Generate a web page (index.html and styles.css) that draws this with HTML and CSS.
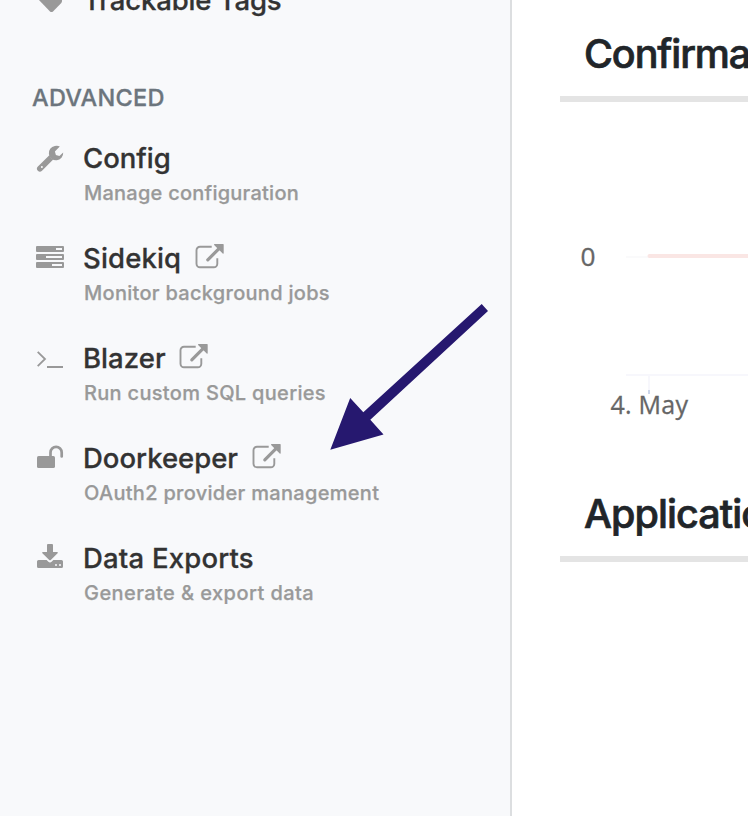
FILE: index.html
```html
<!DOCTYPE html>
<html lang="en">
<head>
<meta charset="utf-8">
<title>Admin</title>
<link rel="stylesheet" href="styles.css">
</head>
<body>
<svg class="symbols" aria-hidden="true">
  <symbol id="external" viewBox="0 0 30 30">
    <path d="M16.7 4.7H5A3.5 3.5 0 0 0 1.5 8.2V21.8A3.5 3.5 0 0 0 5 25.3H18.8A3.5 3.5 0 0 0 22.3 21.8V16.3" fill="none" stroke="currentColor" stroke-width="1.9"/>
    <path d="M12.8 17.8L25 5.7" stroke="currentColor" stroke-width="3.2" stroke-linecap="round"/>
    <path d="M19.5 2H28Q28.7 2 28.7 2.7V11.2Q28.5 12 27.7 11.5L19.1 3Q18.8 2.2 19.5 2Z" fill="currentColor"/>
  </symbol>
</svg>
<div class="app">
  <aside class="sidebar">
    <a class="item item-cut">
      <svg class="icon" viewBox="0 0 30 30"><path d="M2 2H14L25.5 15Q26.7 17 25.3 19L17 27.4Q15.5 28.4 14 27.4L2 15Z" fill="currentColor"/></svg>
      <span class="title t-tags">Trackable Tags</span>
    </a>
    <h2 class="section">ADVANCED</h2>
    <nav class="list">
      <a class="item">
        <svg class="icon" viewBox="0 0 30 30">
          <path d="M13.6 13L1.9 24.6A2.9 2.9 0 0 0 6 28.8L17.2 17.6Q14.5 16.2 13.6 13Z" fill="currentColor"/>
          <circle cx="5.9" cy="24.9" r="1" class="hole"/>
          <path d="M23.8 4.6Q21.7 3.3 18.8 4A7.2 7.2 0 1 0 27.2 10.6L23.4 14.1L19.9 13L18.9 9.5Z" fill="currentColor"/>
        </svg>
        <span class="body"><span class="head"><span class="title t-config">Config</span></span><span class="sub s-config">Manage configuration</span></span>
      </a>
      <a class="item">
        <svg class="icon" viewBox="0 0 30 30">
          <g fill="currentColor"><rect y="4" width="28" height="6" rx="1"/><rect y="12" width="28" height="6" rx="1"/><rect y="20" width="28" height="6" rx="1"/></g>
          <g class="hole"><rect x="20" y="6" width="6" height="2"/><rect x="10" y="14" width="16" height="2"/><rect x="16" y="22" width="10" height="2"/></g>
        </svg>
        <span class="body"><span class="head"><span class="title t-sidekiq">Sidekiq</span><svg class="ext"><use href="#external"/></svg></span><span class="sub s-sidekiq">Monitor background jobs</span></span>
      </a>
      <a class="item">
        <svg class="icon" viewBox="0 0 30 30"><path d="M1.7 9.8L9 17L1.7 24.2" fill="none" stroke="currentColor" stroke-width="1.8"/><rect x="11" y="24" width="16" height="2" fill="currentColor"/></svg>
        <span class="body"><span class="head"><span class="title t-blazer">Blazer</span><svg class="ext"><use href="#external"/></svg></span><span class="sub s-blazer">Run custom SQL queries</span></span>
      </a>
      <a class="item">
        <svg class="icon" viewBox="0 0 30 30"><rect x="1" y="14" width="18" height="12" rx="1.6" fill="currentColor"/><path d="M14.5 14.5V10.5A5.6 5.6 0 0 1 25.7 10.5V14.5" fill="none" stroke="currentColor" stroke-width="2.7" stroke-linecap="round"/></svg>
        <span class="body"><span class="head"><span class="title t-door">Doorkeeper</span><svg class="ext"><use href="#external"/></svg></span><span class="sub s-door">OAuth2 provider management</span></span>
      </a>
      <a class="item">
        <svg class="icon" viewBox="0 0 30 30">
          <path d="M11 3Q11 2 12 2H16Q17 2 17 3V10H21.3Q22.3 10.3 21.6 11.3L14.8 18Q14 18.6 13.2 18L6.4 11.3Q5.7 10.3 6.7 10H11Z" fill="currentColor"/>
          <path d="M2.5 18H10.6L12.4 19.8Q14 21.1 15.6 19.8L17.4 18H25.5Q27 18 27 19.5V24.5Q27 26 25.5 26H2.5Q1 26 1 24.5V19.5Q1 18 2.5 18Z" fill="currentColor"/>
          <g class="hole"><circle cx="20" cy="23" r="1"/><circle cx="24" cy="23" r="1"/></g>
        </svg>
        <span class="body"><span class="head"><span class="title t-data">Data Exports</span></span><span class="sub s-data">Generate &amp; export data</span></span>
      </a>
    </nav>
  </aside>
  <main class="main">
    <section class="panel panel-first">
      <h1 class="heading h-conf">Confirmations</h1>
      <svg class="chart" viewBox="560 102 188 358">
        <rect x="626" y="256" width="24" height="2" fill="#fafafb"/>
        <path d="M649 256H760" stroke="#fae6e4" stroke-width="4"/><circle cx="649.5" cy="256" r="2" fill="#fae6e4"/>
        <path d="M626 375H760M649 376V390" stroke="#f7f7fc" stroke-width="2"/>
        <path d="M649 390V394" stroke="#ccd6eb" stroke-width="2"/>
        <text x="580.5" y="266" class="axis" textLength="15" lengthAdjust="spacingAndGlyphs">0</text>
        <text x="610.5" y="414" class="axis" textLength="77.5" lengthAdjust="spacing">4. May</text>
      </svg>
    </section>
    <section class="panel">
      <h1 class="heading h-app">Applications</h1>
    </section>
  </main>
</div>
<svg class="pointer" viewBox="330 303 159 148"><path d="M330.3 449.7L350.2 398L363.3 412.2L481.7 304L488 311L370.3 419.7L383.5 434.5Z" fill="#26186f"/></svg>
</body>
</html>
```
FILE: styles.css
```css
* { box-sizing: border-box; }
body {
  margin: 0;
  width: 748px;
  height: 816px;
  overflow: hidden;
  background: #fff;
  font-family: Inter, "Liberation Sans", sans-serif;
  font-weight: 500;
}
.symbols { display: none; }
.app { display: flex; height: 816px; }
.sidebar {
  flex: 0 0 512px;
  height: 816px;
  overflow: hidden;
  background: #f8f9fb;
  border-right: 2px solid #dcdee0;
}
.item {
  display: flex;
  height: 100px;
  padding: 12px 0 0 36px;
  color: #999;
}
.item-cut { height: 72px; margin-top: -28px; }
.icon { flex: none; width: 30px; height: 30px; margin-right: 17px; }
.hole { fill: #f8f9fb; }
.body { display: flex; flex-direction: column; }
.head { display: flex; height: 34px; }
.title {
  font-size: 27.5px;
  line-height: 32px;
  color: #333;
  white-space: nowrap;
  -webkit-text-stroke: 0.3px;
}
.t-tags { letter-spacing: -0.12px; }
.t-sidekiq { letter-spacing: 0.15px; }
.t-blazer { letter-spacing: 0.05px; }
.t-data { letter-spacing: 0.2px; }
.ext { width: 30px; height: 30px; margin-left: 14px; }
.t-blazer + .ext { margin-left: 13.4px; }
.sub {
  padding-left: 1px;
  font-size: 20px;
  line-height: 34px;
  white-space: nowrap;
  -webkit-text-stroke: 0.25px;
}
.s-config { letter-spacing: 0.24px; }
.s-sidekiq { letter-spacing: 0.29px; }
.s-blazer { letter-spacing: 0.31px; }
.s-door { letter-spacing: 0.3px; }
.s-data { letter-spacing: 0.43px; }
.section {
  height: 46px;
  margin: 40px 0 0 32px;
  font-size: 23.5px;
  line-height: 28px;
  font-weight: 500;
  letter-spacing: 0.28px;
  color: #6c757d;
  -webkit-text-stroke: 0.3px;
}
.list { display: flex; flex-direction: column; }
.main { flex: 1; min-width: 0; padding-left: 48px; overflow: hidden; }
.panel { height: 460px; overflow: hidden; }
.heading {
  margin: 0;
  height: 102px;
  padding: 30px 0 0 24px;
  border-bottom: 6px solid #e4e4e4;
  font-size: 39.5px;
  line-height: 49px;
  font-weight: 500;
  color: #212529;
  white-space: nowrap;
  -webkit-text-stroke: 0.7px;
}
.h-conf { letter-spacing: -1.1px; }
.h-app { letter-spacing: -0.95px; }
.chart { display: block; width: 188px; height: 358px; }
.axis { font-family: "Open Sans", "Noto Sans", sans-serif; font-size: 25px; font-weight: 400; fill: #666; stroke: #666; stroke-width: 0.3px; }
.pointer { position: absolute; left: 330px; top: 303px; width: 159px; height: 148px; }
```
